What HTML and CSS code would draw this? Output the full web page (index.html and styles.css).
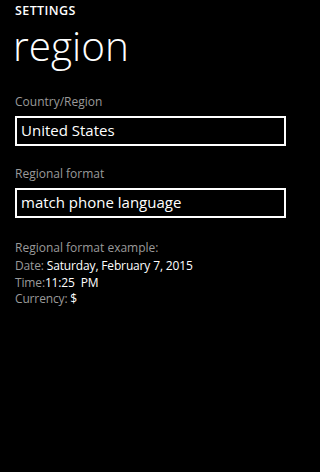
FILE: index.html
```html
<!DOCTYPE html>
<html>
<head>
<meta charset="utf-8">
<link rel="stylesheet" href="styles.css">
</head>
<body>
<div class="page">
  <div class="app-title">SETTINGS</div>
  <div class="page-title">region</div>
  <div class="field">
    <div class="label">Country/Region</div>
    <div class="box">United States</div>
  </div>
  <div class="field">
    <div class="label">Regional format</div>
    <div class="box">match phone language</div>
  </div>
  <div class="example">
    <div class="label">Regional format example:</div>
    <div class="row"><span class="key">Date: </span><span class="val">Saturday, February 7, 2015</span></div>
    <div class="row"><span class="key">Time:</span><span class="val">11:25&nbsp; PM</span></div>
    <div class="row"><span class="key">Currency: </span><span class="val">$</span></div>
  </div>
</div>
</body>
</html>
```

FILE: styles.css
```css
html, body {
  margin: 0;
  padding: 0;
  background: #000;
  color: #fff;
  font-family: "Open Sans", "Noto Sans", sans-serif;
}
.page {
  width: 300px;
  box-sizing: border-box;
  padding: 2px 14px 0 15px;
}
.app-title {
  font-size: 12.5px;
  font-weight: 600;
  line-height: 18px;
  letter-spacing: 0.4px;
}
.page-title {
  font-size: 40.5px;
  font-weight: 300;
  line-height: 48px;
  margin-top: 2px;
  margin-left: -2px;
}
.field {
  margin-top: 24px;
}
.field + .field {
  margin-top: 20px;
}
.label {
  font-size: 12px;
  line-height: 16px;
  color: #9a9a9a;
}
.box {
  margin-top: 6px;
  height: 24px;
  padding: 0 0 2px 4px;
  border: 2px solid #fff;
  font-size: 15px;
  line-height: 24px;
}
.example {
  margin-top: 22px;
}
.example .label {
  margin-bottom: 2px;
}
.row {
  font-size: 12px;
  line-height: 16.5px;
  letter-spacing: -0.15px;
}
.key {
  color: #9a9a9a;
}
.val {
  color: #fff;
}
```
